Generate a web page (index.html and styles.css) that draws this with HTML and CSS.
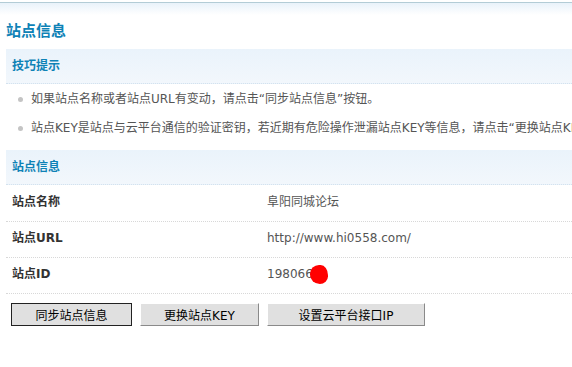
FILE: index.html
```html
<!DOCTYPE html>
<html lang="zh-CN">
  <head>
    <meta charset="UTF-8">
    <title>站点信息</title>
    <link rel="stylesheet" href="styles.css">
  </head>
  <body>
    <div class="topbar"></div>

    <div class="main">
      <h2 class="title">站点信息</h2>

      <div class="section-head">技巧提示</div>
      <ul class="tips">
        <li>如果站点名称或者站点URL有变动，请点击“同步站点信息”按钮。</li>
        <li>站点KEY是站点与云平台通信的验证密钥，若近期有危险操作泄漏站点KEY等信息，请点击“更换站点KEY”按钮。</li>
      </ul>

      <div class="section-head">站点信息</div>
      <div class="info">
        <div class="row">
          <div class="label">站点名称</div>
          <div class="value">阜阳同城论坛</div>
        </div>
        <div class="row">
          <div class="label">站点URL</div>
          <div class="value">http://www.hi0558.com/</div>
        </div>
        <div class="row">
          <div class="label">站点ID</div>
          <div class="value">198066<span class="blot"></span></div>
        </div>
      </div>

      <div class="actions">
        <button class="btn btn-default btn-sync">同步站点信息</button>
        <button class="btn btn-key">更换站点KEY</button>
        <button class="btn btn-ip">设置云平台接口IP</button>
      </div>
    </div>
  </body>
</html>
```

FILE: styles.css
```css
html, body {
  overflow: hidden;
}

body {
  margin: 0;
  font-family: "DejaVu Sans", "Noto Sans CJK SC", sans-serif;
  font-size: 12px;
  color: #444;
  background: #fff;
}

.topbar {
  margin-top: 2px;
  height: 12px;
  border-top: 1px solid #b3ccd6;
  background: linear-gradient(#e9f2fa, #fff);
}

.main {
  padding-left: 6px;
  white-space: nowrap;
}

.title {
  margin: 0 0 4px 0;
  height: 30px;
  line-height: 32px;
  font-size: 15px;
  font-weight: bold;
  color: #0e82b6;
}

.section-head {
  height: 34px;
  line-height: 35px;
  padding-left: 6px;
  font-weight: bold;
  color: #0e82b6;
  background: linear-gradient(#eaf3fb, #f2f7fc);
  border-bottom: 1px dotted #d4e2ee;
}

.tips {
  list-style: none;
  margin: 0 0 8px 0;
  padding: 0;
}

.tips li {
  position: relative;
  height: 29px;
  line-height: 30px;
  padding-left: 25px;
  color: #555;
}

.tips li::before {
  content: "";
  position: absolute;
  left: 12px;
  top: 13px;
  width: 5px;
  height: 5px;
  border-radius: 50%;
  background: #c4c4c4;
}

.info {
  padding-top: 1px;
}

.row {
  display: flex;
  height: 35px;
  line-height: 33px;
  border-bottom: 1px dotted #d8d8d8;
}

.label {
  width: 255px;
  padding-left: 6px;
  font-weight: bold;
  color: #333;
}

.value {
  color: #555;
}

.blot {
  display: inline-block;
  width: 18px;
  height: 19px;
  margin-left: -3px;
  vertical-align: middle;
  background: #f00;
  border-radius: 55% 45% 50% 60% / 50% 60% 45% 55%;
}

.actions {
  display: flex;
  gap: 8px;
  padding: 9px 0 0 5px;
}

.btn {
  height: 23px;
  padding: 0;
  font-family: "DejaVu Sans", "Noto Sans CJK SC", sans-serif;
  font-size: 12px;
  color: #000;
  background: #e0e0e0;
  border: 1px solid;
  border-color: #fff #8a8a8a #8a8a8a #fff;
}

.btn-default {
  border-color: #222;
}

.btn-sync {
  width: 121px;
}

.btn-key {
  width: 119px;
}

.btn-ip {
  width: 158px;
}
```
